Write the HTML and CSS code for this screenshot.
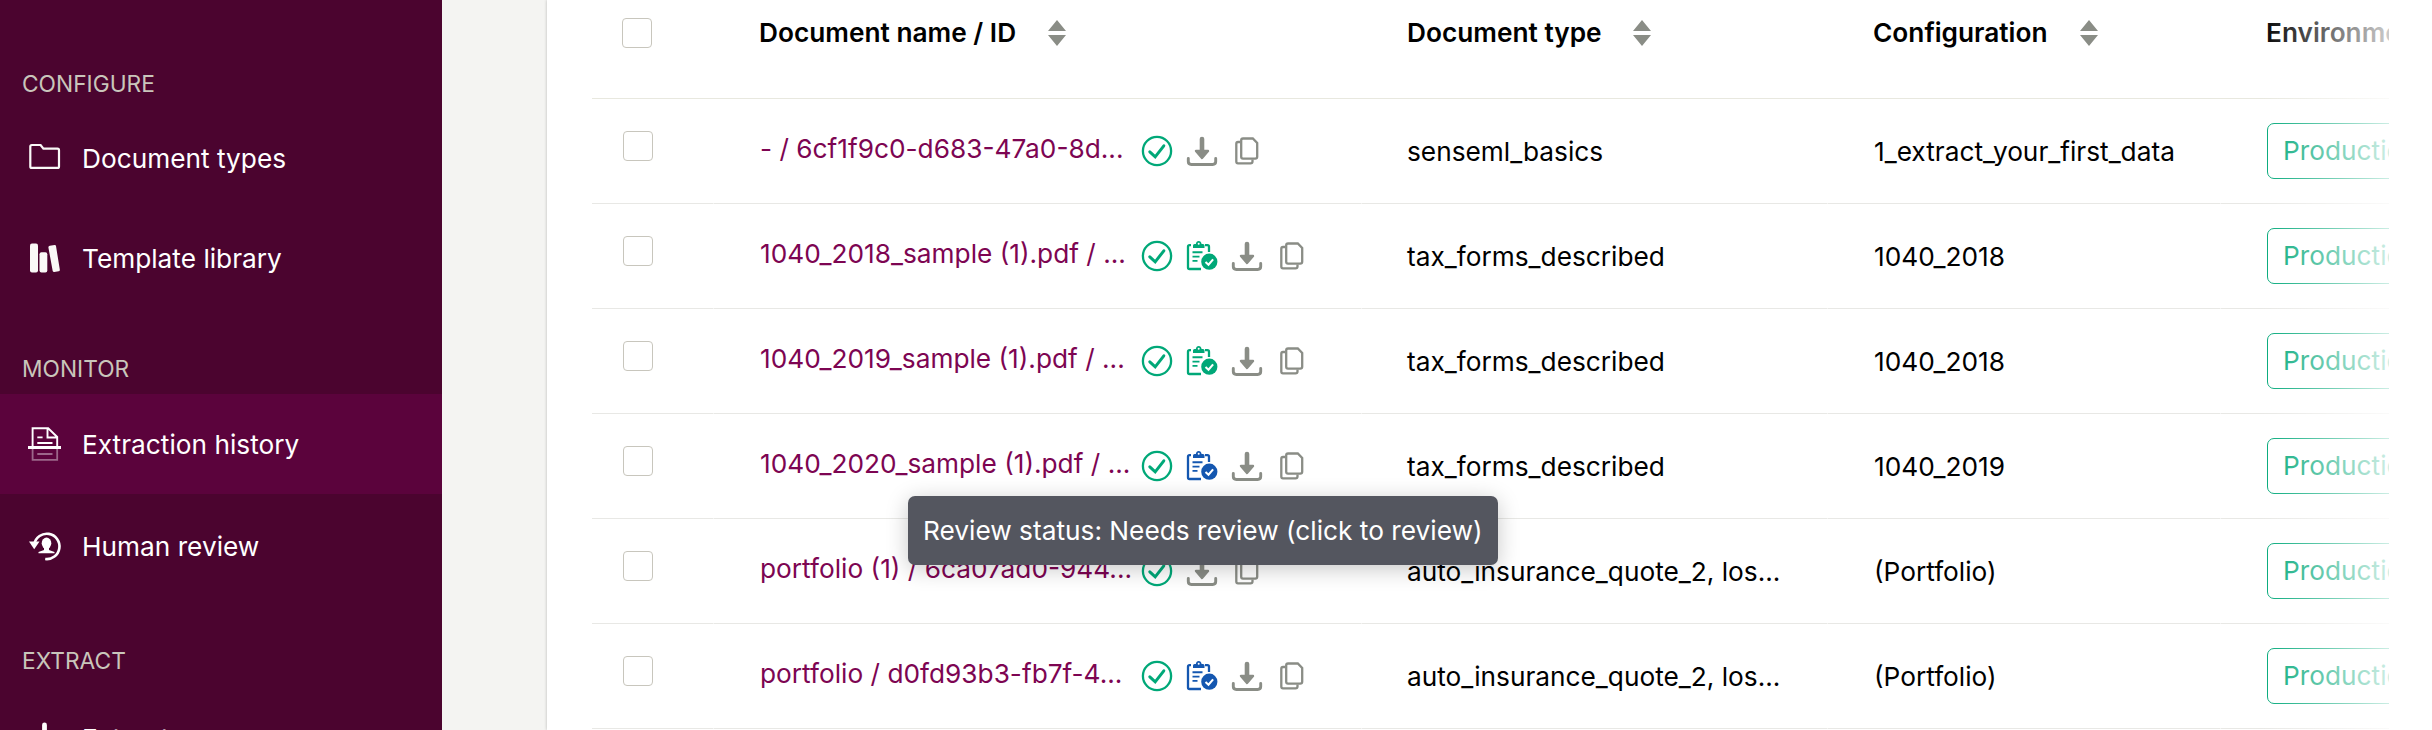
FILE: index.html
```html
<!DOCTYPE html>
<html lang="en">
<head>
<meta charset="utf-8">
<title>Extraction history</title>
<link rel="stylesheet" href="styles.css">
</head>
<body>
<svg class="defs" width="0" height="0" aria-hidden="true">
  <symbol id="ok" viewBox="0 0 32 32"><circle cx="16" cy="16" r="14.1" fill="none" stroke="#00a878" stroke-width="2.3"/><path d="M8.800 16.800l5.400 5 8.600-11" fill="none" stroke="#00a878" stroke-width="3" stroke-linecap="round"/></symbol>
  <symbol id="dl" viewBox="0 0 32 32"><path d="M16 4v13" fill="none" stroke="#8a8d86" stroke-width="4.6" stroke-linecap="round"/><path d="M10 16h12l-6 7z" fill="#8a8d86" stroke="#8a8d86" stroke-width="2.400" stroke-linejoin="round"/><path d="M2.300 23.400v3.200q0 2.900 3 2.900h21.400q3 0 3-2.900v-3.200" fill="none" stroke="#8a8d86" stroke-width="2.900" stroke-linecap="round"/></symbol>
  <symbol id="copy" viewBox="0 0 32 32"><path d="M9 7H7Q5.300 7 5.300 8.800V26.500Q5.300 28.300 7 28.300H19.500Q21.500 28.300 21.500 26.500V24.500" fill="none" stroke="#8a8d86" stroke-width="2.300"/><path d="M12 3.500H21.800L26.200 8V21.800Q26.200 23.600 24.200 23.600H12Q10.200 23.600 10.200 21.800V5.300Q10.200 3.500 12 3.500z" fill="#fff" stroke="#8a8d86" stroke-width="2.300"/></symbol>
  <symbol id="clip" viewBox="0 0 32 32"><path d="M5 5.200H3.500Q2 5.200 2 6.700V27.500Q2 29 3.500 29H15M19 5.200H21.500Q23 5.200 23 6.700V12" fill="none" stroke="currentColor" stroke-width="2.300"/><path d="M7 8V5.500Q7 4 8.500 4H9.800Q10.300 1 12.700 1T15.600 4H17Q18.500 4 18.500 5.500V8z" fill="currentColor"/><circle cx="12.700" cy="3.800" r="1" fill="#fff"/><path d="M6.500 12.300H16.500M6.500 16.600H13.500M6.500 20.900H11.500" stroke="currentColor" stroke-width="1.900"/><circle cx="23.300" cy="21.700" r="8.100" fill="currentColor"/><path d="M19.500 22l3 2.700 4.600-5.300" fill="none" stroke="#fff" stroke-width="2.100"/></symbol>
</svg>
<div class="app">
  <nav class="sidebar">
    <h2 class="section">CONFIGURE</h2>
    <a class="item"><svg class="nav-icon" viewBox="0 0 34 34"><path d="M3.800 4H12.600L15.400 7.700H29.500Q31 7.700 31 9.200V25.400Q31 26.900 29.500 26.900H3.800Q2.300 26.900 2.300 25.400V5.500Q2.300 4 3.800 4z" fill="none" stroke="#faf9f7" stroke-width="2.200"/></svg><span>Document types</span></a>
    <a class="item"><svg class="nav-icon" viewBox="0 0 34 34" fill="#faf9f7"><rect x="2" y="2.600" width="8" height="29" rx="2"/><rect x="11.500" y="11.300" width="7.800" height="20.300" rx="2"/><path d="M21.800 4.800l4.800-.700q1.200-.100 1.400 1l3.800 23.500q.2 1.500-1.200 1.700l-4.300.700q-1.300.1-1.600-1.100L20.400 6.500q-.1-1.400 1.400-1.700z"/></svg><span>Template library</span></a>
    <h2 class="section monitor">MONITOR</h2>
    <a class="item active"><svg class="nav-icon" viewBox="0 0 34 34" fill="none" stroke="#fff"><path d="M4.600 19V1.200H20.200L29.200 10V19M19.500 1V10.500H29.500" stroke-width="1.900"/><path d="M9.300 10.300H14.600M9.300 16H24.500" stroke-width="1.800"/><path d="M0 20.500H33" stroke-width="3.200"/><path d="M4.600 22V32.800H29.200V22M9.300 27H24.500" stroke-width="1.800" opacity=".4"/></svg><span>Extraction history</span></a>
    <a class="item human"><svg class="nav-icon" viewBox="0 0 34 34"><path d="M6.300 15A12.700 12.700 0 1 1 17.200 30" fill="none" stroke="#fff" stroke-width="2.600"/><path d="M1 12.500H11.500L6.200 20.300z" fill="#fff"/><ellipse cx="18.500" cy="14.300" rx="4.800" ry="5.700" fill="#fff"/><path d="M16 17h5v4l5.500 2V24.300H10.500V23l5.500-2z" fill="#fff"/></svg><span>Human review</span></a>
    <h2 class="section extract">EXTRACT</h2>
    <a class="item"><svg class="nav-icon" viewBox="0 0 34 34"><path d="M16.500 4v14" stroke="#fff" stroke-width="4.800" stroke-linecap="round"/><path d="M9 17h15l-7.500 8zM2 24v6h29v-6" fill="#fff"/></svg><span>Extract</span></a>
  </nav>
  <main class="panel">
    <div class="table">
      <div class="row head">
        <div class="cell"><i class="check"></i></div>
        <div class="cell">Document name / ID<svg class="sort" viewBox="0 0 18 26"><path d="M0 11L9 0l9 11zM0 15h18L9 26z"/></svg></div>
        <div class="cell">Document type<svg class="sort type" viewBox="0 0 18 26"><path d="M0 11L9 0l9 11zM0 15h18L9 26z"/></svg></div>
        <div class="cell">Configuration<svg class="sort" viewBox="0 0 18 26"><path d="M0 11L9 0l9 11zM0 15h18L9 26z"/></svg></div>
        <div class="cell">Environment</div>
      </div>
      <div class="row">
        <div class="cell"><i class="check"></i></div>
        <div class="cell shift"><a class="name">- / 6cf1f9c0-d683-47a0-8d...</a><span class="icons"><svg><use href="#ok"/></svg><svg><use href="#dl"/></svg><svg><use href="#copy"/></svg></span></div>
        <div class="cell">senseml_basics</div><div class="cell shift">1_extract_your_first_data</div><div class="cell"><span class="env">Production</span></div>
      </div>
      <div class="row">
        <div class="cell"><i class="check"></i></div>
        <div class="cell shift"><a class="name">1040_2018_sample (1).pdf / ...</a><span class="icons"><svg><use href="#ok"/></svg><svg class="done"><use href="#clip"/></svg><svg><use href="#dl"/></svg><svg><use href="#copy"/></svg></span></div>
        <div class="cell">tax_forms_described</div><div class="cell shift">1040_2018</div><div class="cell"><span class="env">Production</span></div>
      </div>
      <div class="row">
        <div class="cell"><i class="check"></i></div>
        <div class="cell shift"><a class="name">1040_2019_sample (1).pdf / ...</a><span class="icons"><svg><use href="#ok"/></svg><svg class="done"><use href="#clip"/></svg><svg><use href="#dl"/></svg><svg><use href="#copy"/></svg></span></div>
        <div class="cell">tax_forms_described</div><div class="cell shift">1040_2018</div><div class="cell"><span class="env">Production</span></div>
      </div>
      <div class="row">
        <div class="cell"><i class="check"></i></div>
        <div class="cell shift"><a class="name">1040_2020_sample (1).pdf / ...</a><span class="icons"><svg><use href="#ok"/></svg><svg class="todo"><use href="#clip"/></svg><svg><use href="#dl"/></svg><svg><use href="#copy"/></svg></span></div>
        <div class="cell">tax_forms_described</div><div class="cell shift">1040_2019</div><div class="cell"><span class="env">Production</span></div>
      </div>
      <div class="row">
        <div class="cell"><i class="check"></i></div>
        <div class="cell shift"><a class="name">portfolio (1) / 6ca07ad0-944...</a><span class="icons"><svg><use href="#ok"/></svg><svg><use href="#dl"/></svg><svg><use href="#copy"/></svg></span></div>
        <div class="cell">auto_insurance_quote_2, los...</div><div class="cell shift">(Portfolio)</div><div class="cell"><span class="env">Production</span></div>
      </div>
      <div class="row">
        <div class="cell"><i class="check"></i></div>
        <div class="cell shift"><a class="name">portfolio / d0fd93b3-fb7f-4...</a><span class="icons"><svg><use href="#ok"/></svg><svg class="todo"><use href="#clip"/></svg><svg><use href="#dl"/></svg><svg><use href="#copy"/></svg></span></div>
        <div class="cell">auto_insurance_quote_2, los...</div><div class="cell shift">(Portfolio)</div><div class="cell"><span class="env">Production</span></div>
      </div>
      <div class="fade"></div>
    </div>
  </main>
  <div class="tooltip">Review status: Needs review (click to review)</div>
</div>
</body>
</html>
```
FILE: styles.css
```css
* { box-sizing: border-box; }
body { margin: 0; font-family: Inter, "Liberation Sans", sans-serif; font-size: 26.25px; color: #000; }
.defs { position: absolute; }
.app { position: relative; display: flex; width: 2432px; height: 730px; overflow: hidden; background: #f4f4f2; }
.sidebar { width: 442px; flex: none; background: #4b042f; color: #fff; }
.section { margin: 0; padding: 68px 0 0 22px; height: 108px; font-size: 22.75px; font-weight: 400; line-height: 32px; color: #c9c6bb; }
.section.monitor { padding-top: 45px; height: 86px; }
.section.extract { padding-top: 49px; height: 92px; }
.item { display: flex; align-items: center; gap: 20px; height: 100px; padding-left: 28px; }
.item.active { background: #5b033c; }
.item.human { margin-top: 2px; }
.nav-icon { width: 34px; height: 34px; flex: none; }
.panel { margin-left: 105px; flex: 1; min-width: 0; padding-left: 45px; background: #fff; box-shadow: 0 0 3px rgba(0,0,0,.25); }
.table { position: relative; width: 1797px; overflow: hidden; }
.row { display: grid; grid-template-columns: 122px 648px 466px 393px 300px; height: 105px; }
.row.head { height: 99px; font-weight: 600; }
.cell { display: flex; align-items: center; padding-left: 45px; white-space: nowrap; border-bottom: 1px solid #e8e8e5; border-right: 1px solid transparent; }
.cell.shift { padding-left: 46px; }
.cell:first-child { align-items: flex-start; padding: 32px 0 0 31px; }
.head .cell { padding-bottom: 33px; border-right: 0; border-bottom-color: #e8e8df; }
.head .cell:first-child { padding: 18px 0 0 30px; }
.check { width: 30px; height: 30px; border: 1px solid #c8c6bd; border-radius: 4px; background: #fff; }
.sort { width: 18px; height: 26px; margin-left: 32px; fill: #8a8d86; }
.sort.type { margin-left: 31px; }
.name { color: #7d0552; width: 381px; padding-bottom: 5px; }
.icons { display: flex; gap: 13px; }
.icons svg { width: 32px; height: 32px; }
.done { color: #00a878; }
.todo { color: #1457b0; }
.env { height: 56px; width: 170px; margin-left: 1px; padding: 0 15px; line-height: 54px; border: 1px solid #00a878; border-radius: 7px; color: #00a878; }
.fade { position: absolute; top: 0; bottom: 0; right: 0; width: 130px; background: linear-gradient(90deg, rgba(255,255,255,0), rgba(255,255,255,.8)); }
.tooltip { position: absolute; left: 908px; top: 496px; width: 590px; height: 69px; line-height: 70px; padding-left: 15px; border-radius: 7px; background: #54565f; color: #fff; white-space: nowrap; box-shadow: 0 4px 22px rgba(0,0,0,.22); }
```
